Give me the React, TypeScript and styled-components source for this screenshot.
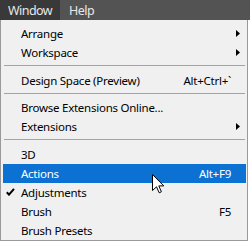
import React from 'react';
import styled, { createGlobalStyle } from 'styled-components';

const GlobalStyle = createGlobalStyle`
  html, body {
    margin: 0;
    padding: 0;
    background: #ffffff;
  }
  body {
    font-family: "Noto Sans", "Open Sans", sans-serif;
  }
`;

const Frame = styled.div`
  position: relative;
  width: 250px;
  height: 242px;
  overflow: hidden;
`;

const MenuBar = styled.div`
  display: flex;
  height: 20px;
  background: #535353;
`;

const BarItem = styled.div<{ $active?: boolean; $pad: number }>`
  display: flex;
  align-items: center;
  padding: 0 ${(p) => p.$pad}px;
  font-size: 12.5px;
  letter-spacing: -0.55px;
  color: #e8e8e8;
  background: ${(p) => (p.$active ? '#393939' : 'transparent')};
`;

const Panel = styled.div`
  box-sizing: border-box;
  width: 248px;
  padding: 4px 1px 0 2px;
  background: #f0f0f0;
  border: 1px solid #999999;
  border-top: none;
`;

const Item = styled.div<{ $hot?: boolean }>`
  position: relative;
  display: flex;
  align-items: center;
  height: 19px;
  padding: 0 15px 0 18px;
  font-size: 11.5px;
  letter-spacing: -0.25px;
  color: ${(p) => (p.$hot ? '#ffffff' : '#000000')};
  background: ${(p) => (p.$hot ? '#0b72d3' : 'transparent')};
  white-space: nowrap;
`;

const Label = styled.span`
  flex: 1;
`;

const Shortcut = styled.span`
  text-align: right;
`;

const Separator = styled.div`
  height: 1px;
  margin: 3px 1px 4.5px 1px;
  background: #a3a3a3;
`;

const Check = styled.svg`
  position: absolute;
  left: 3px;
  top: 5px;
`;

const Arrow = styled.svg`
  position: absolute;
  right: 6px;
  top: 6px;
`;

const Cursor = styled.svg`
  position: absolute;
  left: 152px;
  top: 174px;
`;

type Entry =
  | { kind: 'sep' }
  | { kind: 'item'; label: string; shortcut?: string; sub?: boolean; checked?: boolean; hot?: boolean };

const entries: Entry[] = [
  { kind: 'item', label: 'Arrange', sub: true },
  { kind: 'item', label: 'Workspace', sub: true },
  { kind: 'sep' },
  { kind: 'item', label: 'Design Space (Preview)', shortcut: 'Alt+Ctrl+`' },
  { kind: 'sep' },
  { kind: 'item', label: 'Browse Extensions Online...' },
  { kind: 'item', label: 'Extensions', sub: true },
  { kind: 'sep' },
  { kind: 'item', label: '3D' },
  { kind: 'item', label: 'Actions', shortcut: 'Alt+F9', hot: true },
  { kind: 'item', label: 'Adjustments', checked: true },
  { kind: 'item', label: 'Brush', shortcut: 'F5' },
  { kind: 'item', label: 'Brush Presets' },
];

const App = () => {
  return (
    <Frame>
      <GlobalStyle />
      <MenuBar>
        <BarItem $active $pad={8}>Window</BarItem>
        <BarItem $pad={9}>Help</BarItem>
      </MenuBar>
      <Panel>
        {entries.map((e, i) =>
          e.kind === 'sep' ? (
            <Separator key={i} />
          ) : (
            <Item key={i} $hot={e.hot}>
              {e.checked && (
                <Check width="9" height="8" viewBox="0 0 9 8">
                  <path d="M0.8 4.2 L3 6.6 L8 0.8" fill="none" stroke="#000" strokeWidth="2" />
                </Check>
              )}
              <Label>{e.label}</Label>
              {e.shortcut && <Shortcut>{e.shortcut}</Shortcut>}
              {e.sub && (
                <Arrow width="4" height="7" viewBox="0 0 4 7">
                  <polygon points="0,0 4,3.5 0,7" fill="#000" />
                </Arrow>
              )}
            </Item>
          )
        )}
      </Panel>
      <Cursor width="14" height="20" viewBox="0 0 14 20">
        <path
          d="M0.5 0.5 L0.5 16.5 L4.5 12.8 L7.2 18.8 L9.4 17.8 L6.8 11.9 L11.8 11.9 Z"
          fill="#ffffff"
          stroke="#000000"
          strokeWidth="1"
          strokeLinejoin="miter"
        />
      </Cursor>
    </Frame>
  );
};

export default App;
